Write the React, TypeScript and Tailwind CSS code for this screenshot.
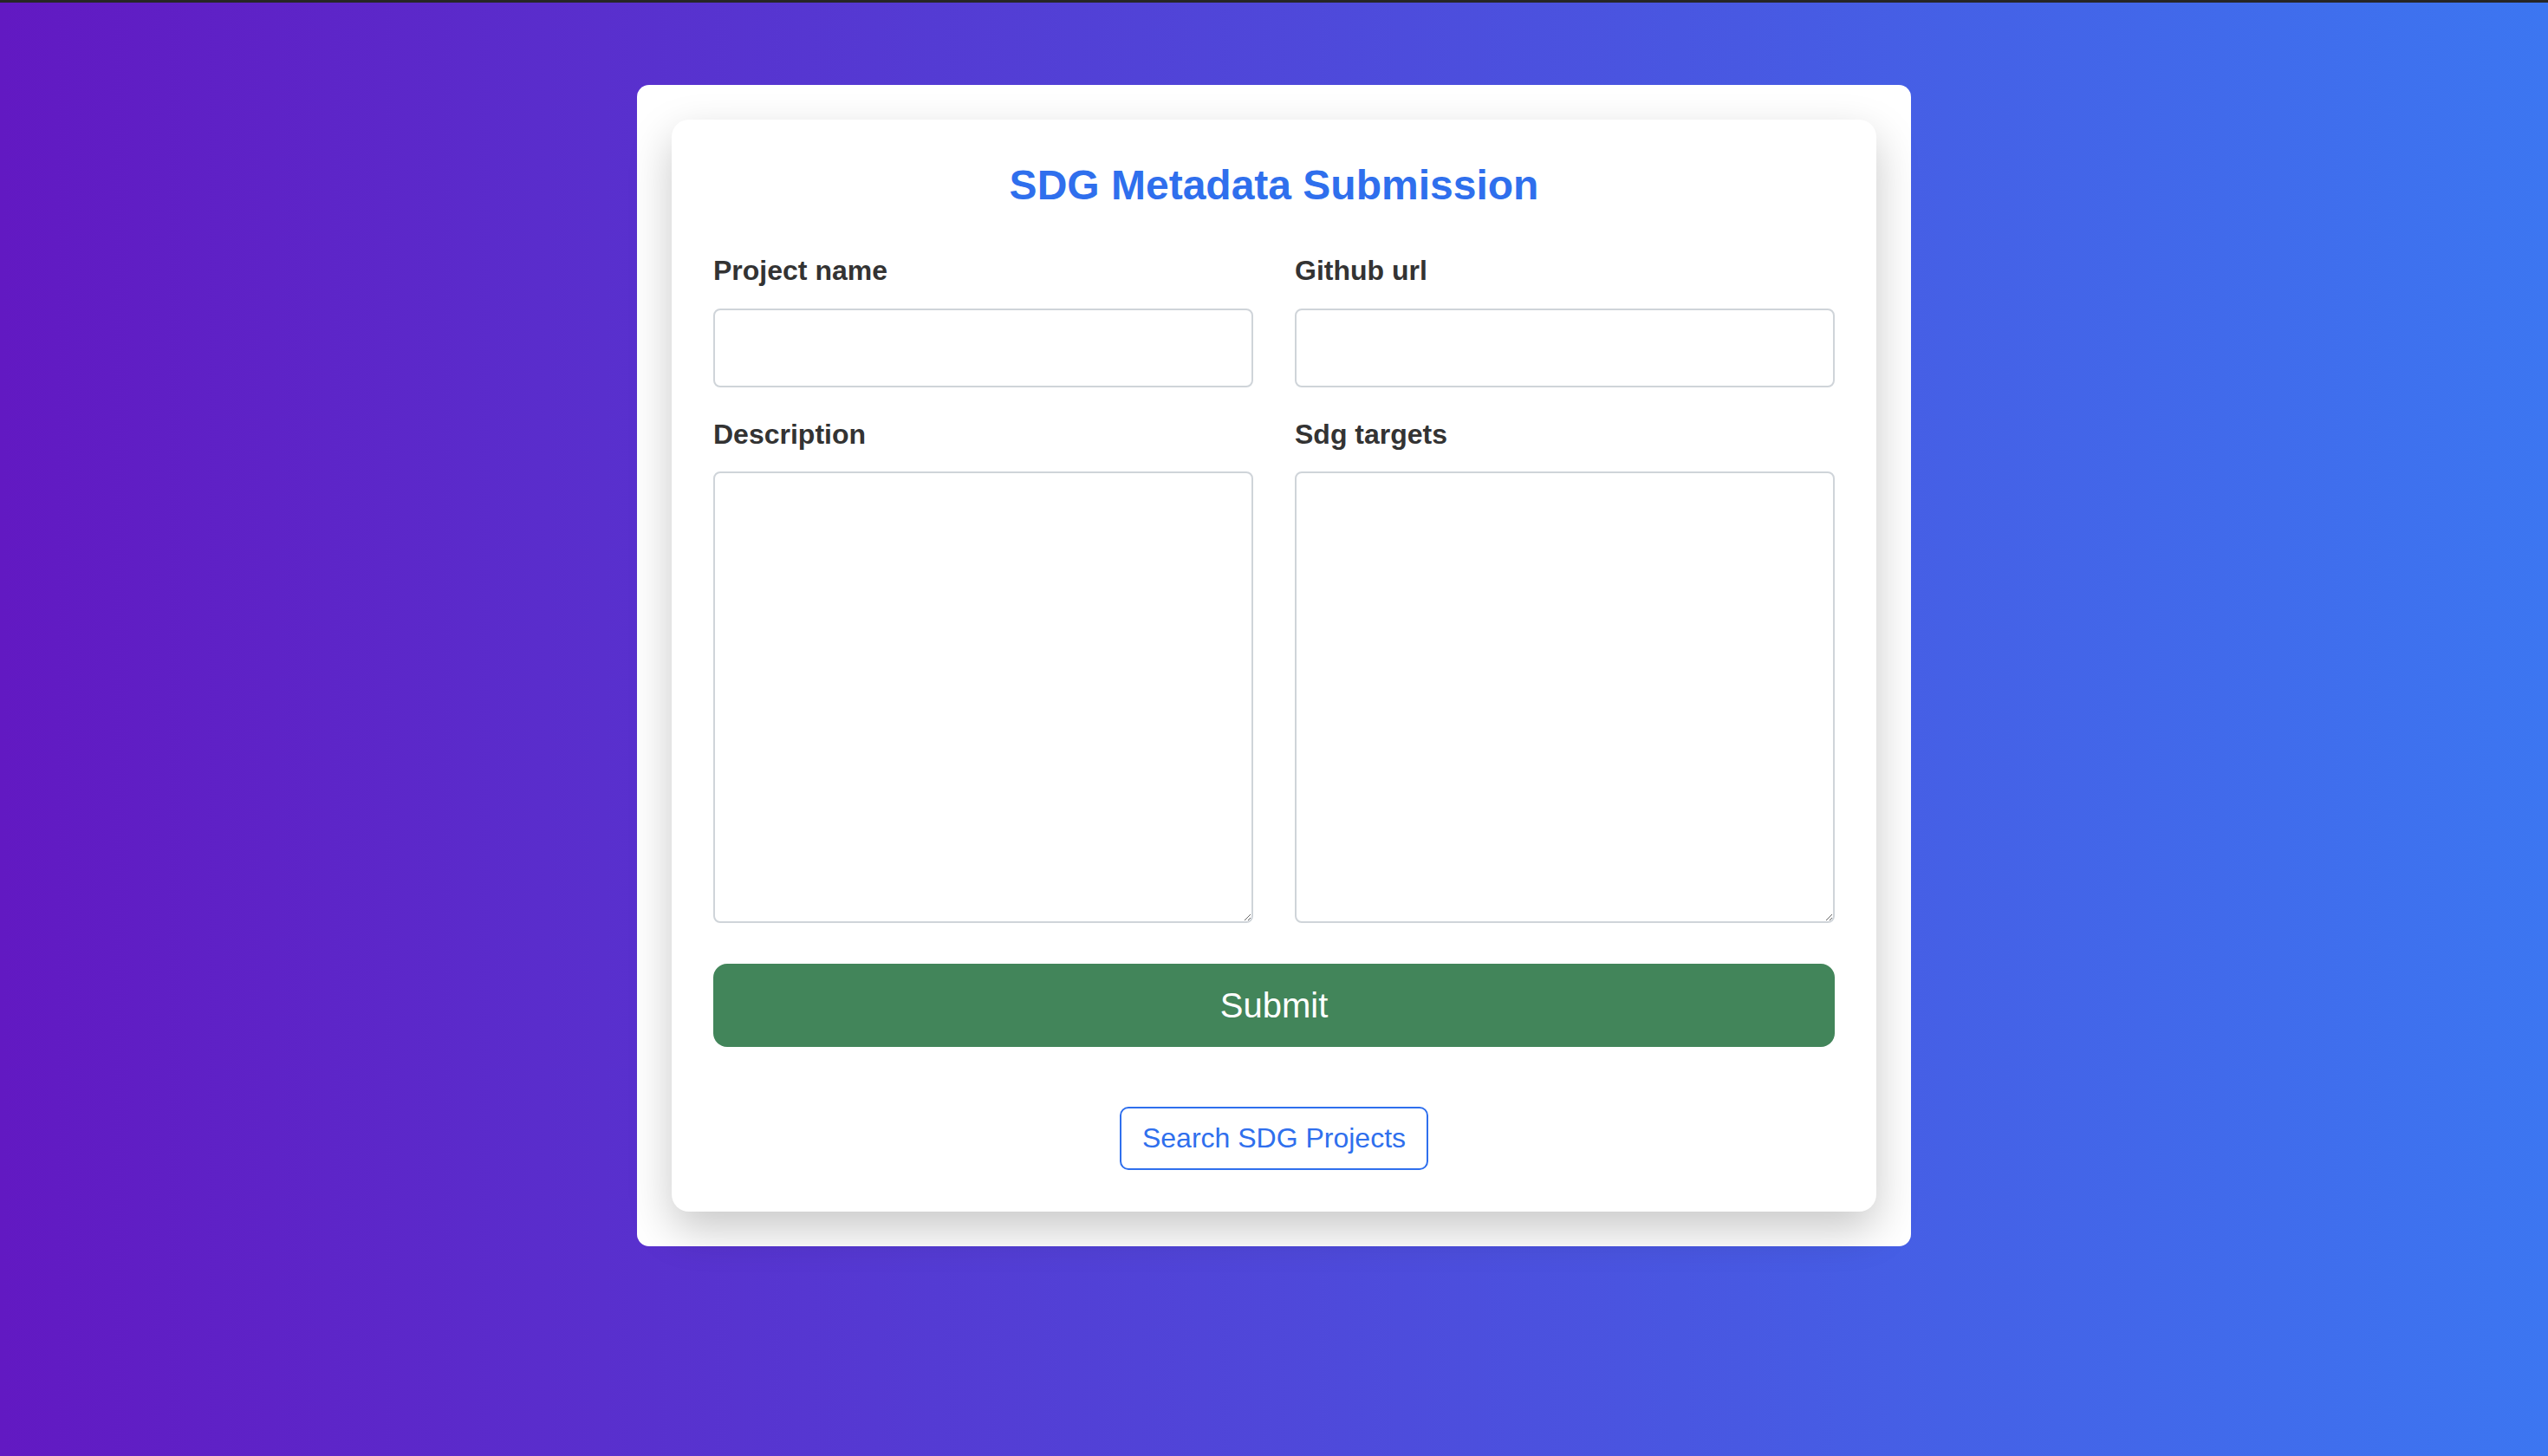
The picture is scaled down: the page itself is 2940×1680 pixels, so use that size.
import { useState } from 'react';

// formulario de envío de metadatos SDG
export default function App() {
  const [form, setForm] = useState({ name: '', github: '', description: '', targets: '' });

  const set = (k: keyof typeof form) => (e: React.ChangeEvent<HTMLInputElement | HTMLTextAreaElement>) =>
    setForm(prev => ({ ...prev, [k]: e.target.value }));

  const labelCls = 'block text-[32px] leading-[37px] font-bold text-[#333333]';
  const inputCls = 'block w-full border-2 border-[#cfd4d9] rounded-[8px] bg-white px-4 text-[32px] text-[#333] outline-none';

  return (
    <div className="min-h-screen bg-[linear-gradient(to_right,#6219c2,#3c76f1)] font-['Liberation_Sans',Arial,sans-serif]">
      <div className="h-[3px] bg-[#262626]" />
      <div className="flex justify-center pt-[95px] pb-[200px]">
        <div className="w-[1470px] bg-white rounded-[14px] p-10">
          <div className="bg-white rounded-[20px] shadow-[0_20px_50px_rgba(0,0,0,0.22)] p-12">
            <h1 className="text-center text-[48px] leading-[55px] font-bold text-[#2f6fed] mb-[53px]">
              SDG Metadata Submission
            </h1>

            <div className="grid grid-cols-2 gap-x-12">
              <div>
                <label className={`${labelCls} mb-[25px]`}>Project name</label>
                <input value={form.name} onChange={set('name')} className={`${inputCls} h-[91px]`} />
              </div>
              <div>
                <label className={`${labelCls} mb-[25px]`}>Github url</label>
                <input value={form.github} onChange={set('github')} className={`${inputCls} h-[91px]`} />
              </div>

              <div className="mt-[36px]">
                <label className={`${labelCls} mb-[24px]`}>Description</label>
                <textarea value={form.description} onChange={set('description')} className={`${inputCls} h-[521px] py-3`} />
              </div>
              <div className="mt-[36px]">
                <label className={`${labelCls} mb-[24px]`}>Sdg targets</label>
                <textarea value={form.targets} onChange={set('targets')} className={`${inputCls} h-[521px] py-3`} />
              </div>
            </div>

            <button className="mt-[47px] w-full h-[96px] rounded-[16px] bg-[#42855a] text-white text-[40px] leading-none">
              Submit
            </button>

            <div className="flex justify-center mt-[69px]">
              <button className="border-2 border-[#2f6fed] rounded-[10px] px-6 py-4 text-[32px] leading-[37px] text-[#2f6fed] bg-white">
                Search SDG Projects
              </button>
            </div>
          </div>
        </div>
      </div>
    </div>
  );
}
